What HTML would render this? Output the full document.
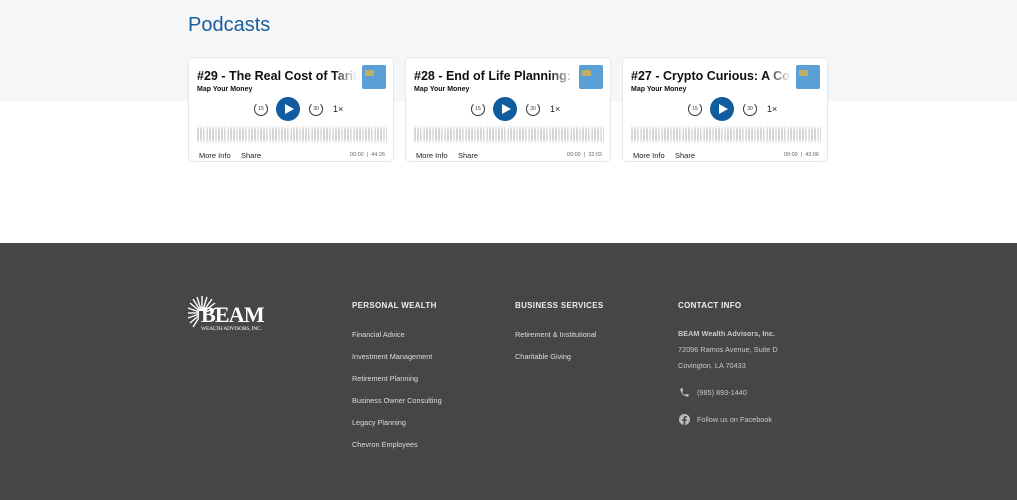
<!DOCTYPE html><html><head><style>
*{margin:0;padding:0;box-sizing:border-box}
body{width:1017px;height:500px;overflow:hidden;font-family:"Liberation Sans",sans-serif;background:#fff;position:relative}
.top{position:absolute;left:0;top:0;width:1017px;height:102px;background:#f5f6f8}
h1{position:absolute;left:188px;top:14px;font-size:20px;font-weight:normal;color:#1a5d9c}
.card{position:absolute;top:57px;width:206px;height:105px;background:#fff;border:1px solid #e8e8e8;border-radius:5px;overflow:hidden}
.t{position:absolute;left:8px;top:11px;width:160px;white-space:nowrap;overflow:hidden;font-size:12.5px;font-weight:bold;color:#111;-webkit-mask-image:linear-gradient(90deg,#000 85%,transparent)}
.s{position:absolute;left:8px;top:28px;font-size:7px;color:#111;font-weight:bold}
.art{position:absolute;left:173px;top:7px;width:24px;height:24px;background:#5a9fd6;border-radius:2px}
.art:before{content:"";position:absolute;left:3px;top:5px;width:9px;height:6px;background:#d9b04a;opacity:.8}
.play{position:absolute;left:87px;top:39px;width:24px;height:24px;border-radius:50%;background:#115c9e}
.play:after{content:"";position:absolute;left:9px;top:7px;border-left:9px solid #fff;border-top:5px solid transparent;border-bottom:5px solid transparent}
.sk{position:absolute;top:44px;width:14px;height:14px;border:1.3px solid #333;border-radius:50%;font-size:5px;text-align:center;line-height:12px;color:#333;border-top-color:transparent}
.sp{position:absolute;left:144px;top:46px;font-size:9px;color:#222}
.wave{position:absolute;left:8px;top:67px;width:190px;height:19px;background:repeating-linear-gradient(90deg,#d6d6d6 0 2px,transparent 2px 3px);-webkit-mask-image:linear-gradient(180deg,transparent 0,#000 25%,#000 75%,transparent 100%),repeating-linear-gradient(90deg,#000 0 7px,rgba(0,0,0,.55) 7px 10px,#000 10px 17px,rgba(0,0,0,.7) 17px 21px);-webkit-mask-composite:source-in}
.mi{position:absolute;top:93px;font-size:7.5px;color:#222}
.tm{position:absolute;right:8px;top:94px;font-size:5.5px;color:#666}
.foot{position:absolute;left:0;top:243px;width:1017px;height:257px;background:#464646;color:#ddd}
.h{position:absolute;top:58px;font-size:8px;font-weight:bold;letter-spacing:.3px;color:#eee}
.l{position:absolute;font-size:7.3px;color:#ddd}
.g{color:#c8c8c8}
</style></head><body>
<div class="top"></div>
<h1>Podcasts</h1>

<div class="card" style="left:188px"><div class="t">#29 - The Real Cost of Tariffs</div><div class="s">Map Your Money</div><div class="art"></div>
<div class="sk" style="left:65px">15</div><div class="play"></div><div class="sk" style="left:120px">30</div><div class="sp">1×</div><div class="wave"></div>
<div class="mi" style="left:10px">More Info</div><div class="mi" style="left:52px">Share</div><div class="tm">00:00 &nbsp;|&nbsp; 44:26</div></div>

<div class="card" style="left:405px"><div class="t">#28 - End of Life Planning: A</div><div class="s">Map Your Money</div><div class="art"></div>
<div class="sk" style="left:65px">15</div><div class="play"></div><div class="sk" style="left:120px">30</div><div class="sp">1×</div><div class="wave"></div>
<div class="mi" style="left:10px">More Info</div><div class="mi" style="left:52px">Share</div><div class="tm">00:00 &nbsp;|&nbsp; 32:02</div></div>

<div class="card" style="left:622px"><div class="t">#27 - Crypto Curious: A Con</div><div class="s">Map Your Money</div><div class="art"></div>
<div class="sk" style="left:65px">15</div><div class="play"></div><div class="sk" style="left:120px">30</div><div class="sp">1×</div><div class="wave"></div>
<div class="mi" style="left:10px">More Info</div><div class="mi" style="left:52px">Share</div><div class="tm">00:00 &nbsp;|&nbsp; 43:06</div></div>

<div class="foot">
<svg style="position:absolute;left:187px;top:53px" width="36" height="34" viewBox="0 0 36 34"><g stroke="#fff" stroke-width="1.4">
<line x1="15" y1="17" x2="1" y2="17"/><line x1="15" y1="17" x2="1" y2="12"/><line x1="15" y1="17" x2="3" y2="7"/><line x1="15" y1="17" x2="6" y2="3"/><line x1="15" y1="17" x2="10" y2="1"/><line x1="15" y1="17" x2="15" y2="0"/><line x1="15" y1="17" x2="20" y2="1"/><line x1="15" y1="17" x2="25" y2="3"/><line x1="15" y1="17" x2="28" y2="7"/><line x1="15" y1="17" x2="30" y2="12"/><line x1="15" y1="17" x2="1" y2="22"/><line x1="15" y1="17" x2="3" y2="27"/><line x1="15" y1="17" x2="6" y2="31"/></g><rect x="12" y="15" width="6" height="19" fill="#464646"/></svg>
<div style="position:absolute;left:201px;top:59px;font-family:'Liberation Serif',serif;font-size:22px;font-weight:bold;color:#fff;letter-spacing:-0.8px">BEAM</div>
<div style="position:absolute;left:201px;top:83px;font-family:'Liberation Serif',serif;font-size:5.5px;color:#fff;letter-spacing:-0.2px">WEALTH ADVISORS, INC.</div>

<div class="h" style="left:352px">PERSONAL WEALTH</div>
<div class="l" style="left:352px;top:87px">Financial Advice</div>
<div class="l" style="left:352px;top:109px">Investment Management</div>
<div class="l" style="left:352px;top:131px">Retirement Planning</div>
<div class="l" style="left:352px;top:153px">Business Owner Consulting</div>
<div class="l" style="left:352px;top:175px">Legacy Planning</div>
<div class="l" style="left:352px;top:197px">Chevron Employees</div>

<div class="h" style="left:515px">BUSINESS SERVICES</div>
<div class="l" style="left:515px;top:87px">Retirement &amp; Institutional</div>
<div class="l" style="left:515px;top:109px">Charitable Giving</div>

<div class="h" style="left:678px">CONTACT INFO</div>
<div class="l g" style="left:678px;top:86px;font-weight:bold">BEAM Wealth Advisors, Inc.</div>
<div class="l g" style="left:678px;top:102px">72096 Ramos Avenue, Suite D</div>
<div class="l g" style="left:678px;top:118px">Covington, LA 70433</div>
<svg style="position:absolute;left:679px;top:144px" width="11" height="11" viewBox="0 0 24 24"><path fill="#bbb" d="M6.6 10.8c1.4 2.8 3.8 5.1 6.6 6.6l2.2-2.2c.3-.3.7-.4 1-.2 1.1.4 2.3.6 3.6.6.6 0 1 .4 1 1V20c0 .6-.4 1-1 1C10.6 21 3 13.4 3 4c0-.6.4-1 1-1h3.5c.6 0 1 .4 1 1 0 1.3.2 2.5.6 3.6.1.3 0 .7-.2 1z"/></svg>
<div class="l g" style="left:697px;top:145px">(985) 893-1440</div>
<svg style="position:absolute;left:679px;top:171px" width="11" height="11" viewBox="0 0 24 24"><circle cx="12" cy="12" r="12" fill="#bbb"/><path fill="#464646" d="M13.5 24v-9h3l.5-3.5h-3.5V9.3c0-1 .3-1.7 1.7-1.7H17V4.5c-.3 0-1.4-.1-2.6-.1-2.6 0-4.4 1.6-4.4 4.5v2.6H7V15h3v9z"/></svg>
<div class="l g" style="left:697px;top:172px">Follow us on Facebook</div>
</div>
</body></html>
